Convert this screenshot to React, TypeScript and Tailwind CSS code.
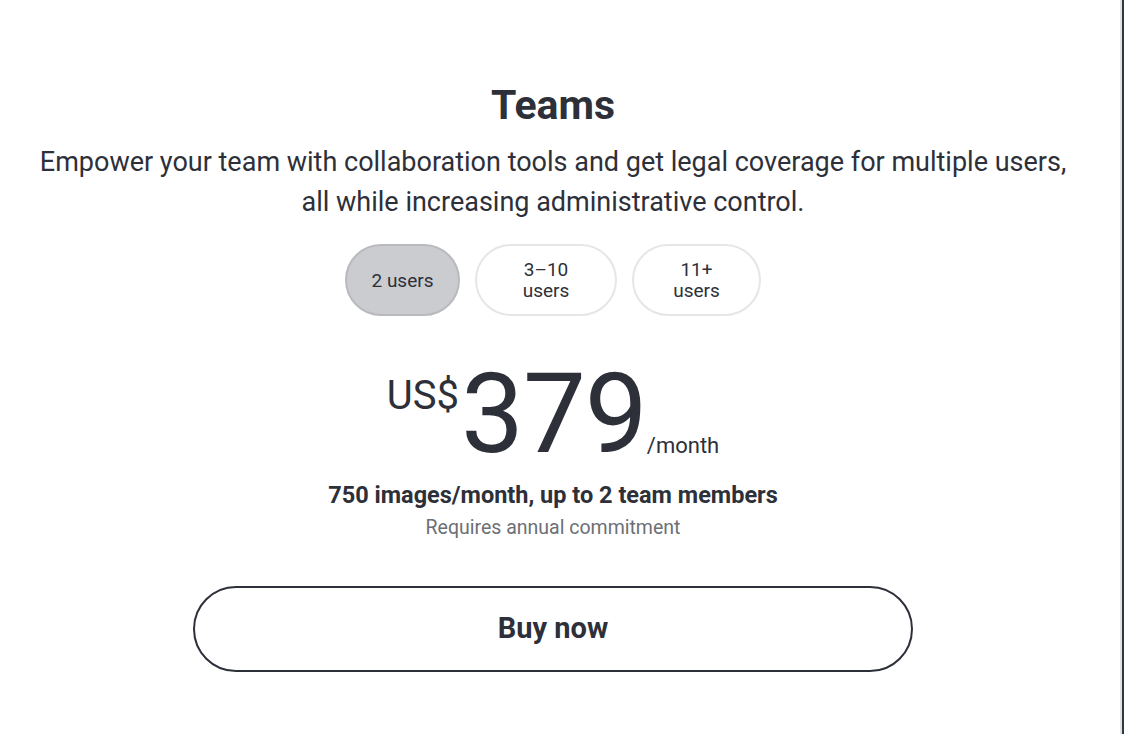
import React from "react";

const tiers = [
  { lines: ["2 users"], active: true, w: "w-[115px]" },
  { lines: ["3–10", "users"], active: false, w: "w-[142px]" },
  { lines: ["11+", "users"], active: false, w: "w-[129px]" },
];

export default function App() {
  return (
    <div
      className="flex h-[734px] w-[1124px] bg-white text-[#2d3039]"
      style={{ fontFamily: "Roboto, 'Noto Sans', sans-serif" }}
    >
      <main className="flex w-[1106px] flex-col items-center pt-[82px]">
        <h1 className="text-[41px] font-bold leading-[46px]">Teams</h1>
        <p className="mt-[14px] text-center text-[27px] leading-[40px]">
          Empower your team with collaboration tools and get legal coverage for multiple users,
          <br />
          all while increasing administrative control.
        </p>

        <div className="mt-[22px] flex gap-[15px]">
          {tiers.map((t) => (
            <button
              key={t.lines.join(" ")}
              className={`flex h-[72px] ${t.w} flex-col items-center justify-center whitespace-nowrap rounded-full border-2 text-center text-[19px] leading-[21px] ${
                t.active ? "border-[#b9babd] bg-[#cbccd0]" : "border-[#e6e6e6] bg-white"
              }`}
            >
              {t.lines.map((l) => (
                <span key={l}>{l}</span>
              ))}
            </button>
          ))}
        </div>

        <div className="mt-[48px] flex items-end">
          <span className="mb-[48px] text-[40px] leading-none">US$</span>
          <span className="ml-[2px] text-[112px] leading-[100px] tracking-[-1px]">379</span>
          <span className="mb-[7px] text-[22px] leading-none">/month</span>
        </div>

        <p className="mt-[16px] text-[23.5px] font-bold leading-[30px]">
          750 images/month, up to 2 team members
        </p>
        <p className="mt-[6px] text-[19.5px] leading-[24px] text-[#6c6f75]">
          Requires annual commitment
        </p>

        <button className="mt-[46px] h-[86px] w-[720px] rounded-full border-2 border-[#2d3039] bg-white text-[29px] font-bold">
          Buy now
        </button>
      </main>
      <div className="w-[14px]" />
      <div className="w-[2px] bg-[#e2e2e2]" />
      <div className="w-[2px] bg-[#2a3a40]" />
    </div>
  );
}
